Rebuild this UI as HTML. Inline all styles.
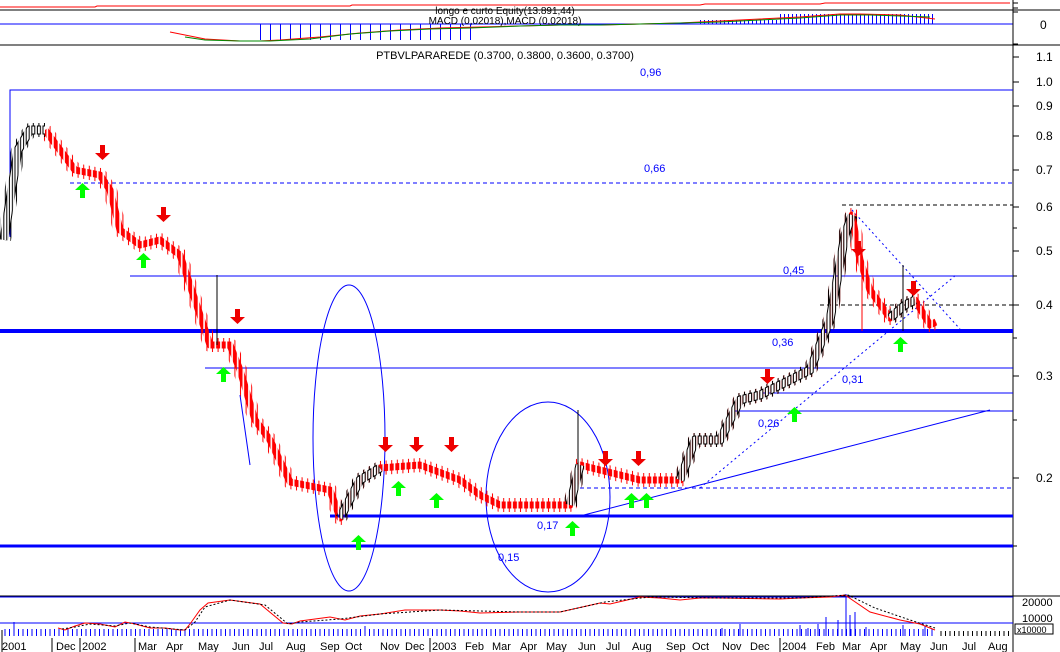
<!DOCTYPE html><html><head><meta charset="utf-8"><style>
html,body{margin:0;padding:0;background:#fff;width:1060px;height:652px;overflow:hidden}
svg{display:block;font-family:"Liberation Sans",sans-serif}
</style></head><body>
<svg width="1060" height="652" viewBox="0 0 1060 652" xmlns="http://www.w3.org/2000/svg">
<defs>
<pattern id="pb" x="2.5" y="0" width="5.6" height="10" patternUnits="userSpaceOnUse"><rect x="0.8" y="0" width="4" height="10" fill="#fff"/></pattern>
<pattern id="pi" x="2.5" y="0" width="5.6" height="10" patternUnits="userSpaceOnUse"><rect x="1.8" y="0" width="2" height="10" fill="#fff"/></pattern>
<pattern id="pw" x="2.5" y="0" width="5.6" height="10" patternUnits="userSpaceOnUse"><rect x="2.3" y="0" width="1" height="10" fill="#fff"/></pattern>
<mask id="mb" maskUnits="userSpaceOnUse" x="0" y="0" width="1060" height="652"><rect width="1060" height="652" fill="url(#pb)"/></mask>
<mask id="mi" maskUnits="userSpaceOnUse" x="0" y="0" width="1060" height="652"><rect width="1060" height="652" fill="url(#pi)"/></mask>
<mask id="mw" maskUnits="userSpaceOnUse" x="0" y="0" width="1060" height="652"><rect width="1060" height="652" fill="url(#pw)"/></mask>
<pattern id="h10" x="0" y="0" width="10" height="10" patternUnits="userSpaceOnUse"><rect x="0" width="1" height="10" fill="#00f"/></pattern>
<pattern id="h4" x="0" y="0" width="4" height="10" patternUnits="userSpaceOnUse"><rect x="0" width="1" height="10" fill="#00f"/></pattern>
<pattern id="v45" x="0" y="0" width="4.5" height="10" patternUnits="userSpaceOnUse"><rect x="0" width="1" height="10" fill="#00f"/></pattern>
<pattern id="v45k" x="0" y="0" width="4.5" height="10" patternUnits="userSpaceOnUse"><rect x="0" width="1" height="10" fill="#000"/></pattern>
</defs>
<rect width="1060" height="652" fill="#fff"/>
<!-- top panel -->
<polyline points="0,7 95,7 97,6 350,6 352,5 700,5 705,4 820,4 825,3 1010,3" fill="none" stroke="#f00"/>
<line x1="0" y1="10" x2="1060" y2="10" stroke="#000"/>
<rect x="258" y="24" width="215" height="16" fill="url(#h10)"/>
<rect x="700" y="14" width="236" height="10" fill="url(#h4)"/>
<rect x="700" y="14" width="80" height="6" fill="#fff"/>
<line x1="0" y1="24" x2="1013" y2="24" stroke="#00f"/>
<line x1="0" y1="45" x2="1060" y2="45" stroke="#000"/>
<text x="505" y="14" font-size="10" text-anchor="middle" fill="#000">longo e curto Equity(13.891,44)</text>
<text x="505" y="24" font-size="10" text-anchor="middle" fill="#000">MACD (0,02018),MACD (0,02018)</text>
<polyline points="170,32 185,35 205,39 240,41 260,41 280,40 320,37 360,33 400,30 440,28 480,27 520,26 560,25 600,25 640,24 680,23 720,21 760,19 800,17 840,14 860,14 900,15 935,19" fill="none" stroke="#f00"/>
<polyline points="185,37 205,40 240,41 270,41 310,39 350,34 390,31 430,29 470,28 520,26 560,25 600,25 640,24 680,23 720,22 760,20 800,18 840,15 870,15 900,16 930,17" fill="none" stroke="#080"/>
<!-- right axis -->
<line x1="1013" y1="0" x2="1013" y2="652" stroke="#000"/>
<g stroke="#000"><line x1="1013" y1="3" x2="1018" y2="3"/><line x1="1013" y1="8" x2="1018" y2="8"/><line x1="1013" y1="12" x2="1018" y2="12"/><line x1="1013" y1="44" x2="1018" y2="44"/>
<line x1="1013" y1="57" x2="1019" y2="57"/><line x1="1013" y1="82" x2="1019" y2="82"/><line x1="1013" y1="106" x2="1019" y2="106"/><line x1="1013" y1="136" x2="1019" y2="136"/><line x1="1013" y1="170" x2="1019" y2="170"/><line x1="1013" y1="207" x2="1019" y2="207"/><line x1="1013" y1="251" x2="1019" y2="251"/><line x1="1013" y1="305" x2="1019" y2="305"/><line x1="1013" y1="376" x2="1019" y2="376"/><line x1="1013" y1="478" x2="1019" y2="478"/>
<line x1="1013" y1="228" x2="1017" y2="228"/><line x1="1013" y1="276" x2="1017" y2="276"/><line x1="1013" y1="338" x2="1017" y2="338"/><line x1="1013" y1="420" x2="1017" y2="420"/><line x1="1013" y1="546" x2="1017" y2="546"/>
</g>
<g font-size="12" fill="#000">
<text x="1040" y="29">0</text>
<text x="1036" y="61">1.1</text><text x="1036" y="86">1.0</text><text x="1036" y="110">0.9</text>
<text x="1036" y="140">0.8</text><text x="1036" y="174">0.7</text><text x="1036" y="211">0.6</text>
<text x="1036" y="255">0.5</text><text x="1036" y="309">0.4</text><text x="1036" y="380">0.3</text>
<text x="1036" y="482">0.2</text>
<text x="1022" y="606" font-size="11">20000</text><text x="1022" y="622" font-size="11">10000</text>
</g>
<rect x="1015" y="624" width="38" height="10" fill="none" stroke="#000"/>
<text x="1017" y="633" font-size="9">x10000</text>
<text x="505" y="59" font-size="11" text-anchor="middle">PTBVLPARAREDE (0.3700, 0.3800, 0.3600, 0.3700)</text>
<!-- lines -->
<g stroke="#00f" fill="none">
<polyline points="10,237 10,90 1013,90"/>
<line x1="130" y1="276" x2="1013" y2="276"/>
<line x1="0" y1="331" x2="1013" y2="331" stroke-width="4"/>
<line x1="205" y1="368" x2="1013" y2="368"/>
<line x1="760" y1="393" x2="1013" y2="393"/>
<line x1="735" y1="411" x2="1013" y2="411"/>
<line x1="330" y1="516" x2="1013" y2="516" stroke-width="3"/>
<line x1="0" y1="546" x2="1013" y2="546" stroke-width="3"/>
<line x1="70" y1="183" x2="1013" y2="183" stroke-dasharray="4,3"/>
<line x1="580" y1="488" x2="1013" y2="488" stroke-dasharray="4,3"/>
<line x1="842" y1="205" x2="1013" y2="205" stroke-dasharray="4,3" stroke="#000"/>
<line x1="820" y1="305" x2="1013" y2="305" stroke-dasharray="4,3" stroke="#000"/>
<line x1="700" y1="488" x2="956" y2="275" stroke-dasharray="2,3"/>
<line x1="852" y1="210" x2="960" y2="329" stroke-dasharray="2,3"/>
<line x1="580" y1="516" x2="990" y2="410"/>
<line x1="240" y1="395" x2="250" y2="465"/>
<ellipse cx="349" cy="438" rx="36" ry="153"/>
<ellipse cx="548" cy="497" rx="62" ry="95"/>
</g>
<g font-size="11" fill="#00f">
<text x="640" y="76">0,96</text><text x="644" y="172">0,66</text><text x="783" y="274">0,45</text>
<text x="772" y="346">0,36</text><text x="842" y="383">0,31</text><text x="758" y="427">0,26</text>
<text x="537" y="529">0,17</text><text x="498" y="561">0,15</text>
</g>
<!-- candles: wicks -->
<polyline mask="url(#mw)" fill="none" stroke="#f00" stroke-width="14" stroke-linejoin="round" points="45,130 60,150 75,170 100,175 110,190 120,230 140,245 160,240 180,255 195,300 210,345 230,345 240,370 255,420 270,440 290,482 330,490 340,518 360,480 380,468 420,465 460,480 480,495 500,505 540,505 570,505 580,465 600,470 640,480 680,480 695,440 720,440 740,400 760,395 790,380 810,370 830,320 845,235 852,215 860,260 870,290 890,318 905,305 915,300 930,325 936,322"/>
<g mask="url(#mw)" fill="none" stroke="#000" stroke-width="14" stroke-linejoin="round">
<polyline points="4,240 10,200 18,150 30,130 45,130"/>
<polyline points="340,518 360,480 380,468"/>
<polyline points="570,505 580,465"/>
<polyline points="680,480 695,440 720,440 740,400 760,395 790,380 810,370 830,320 845,235 852,215"/>
<polyline points="890,318 905,305 915,300"/>
</g>
<!-- red bodies -->
<polyline mask="url(#mb)" fill="none" stroke="#f00" stroke-width="7" stroke-linejoin="round" points="45,130 60,150 75,170 100,175 110,190 120,230 140,245 160,240 180,255 195,300 210,345 230,345 240,370 255,420 270,440 290,482 330,490 340,518 360,480 380,468 420,465 460,480 480,495 500,505 540,505 570,505 580,465 600,470 640,480 680,480 695,440 720,440 740,400 760,395 790,380 810,370 830,320 845,235 852,215 860,260 870,290 890,318 905,305 915,300 930,325 936,322"/>
<!-- up candles: outline -->
<g mask="url(#mb)" fill="none" stroke="#000" stroke-width="9" stroke-linejoin="round">
<polyline points="4,240 10,200 18,150 30,130 45,130"/>
<polyline points="340,518 360,480 380,468"/>
<polyline points="570,505 580,465"/>
<polyline points="680,480 695,440 720,440 740,400 760,395 790,380 810,370 830,320 845,235 852,215"/>
<polyline points="890,318 905,305 915,300"/>
</g>
<g mask="url(#mi)" fill="none" stroke="#fff" stroke-width="7" stroke-linejoin="round">
<polyline points="4,240 10,200 18,150 30,130 45,130"/>
<polyline points="340,518 360,480 380,468"/>
<polyline points="570,505 580,465"/>
<polyline points="680,480 695,440 720,440 740,400 760,395 790,380 810,370 830,320 845,235 852,215"/>
<polyline points="890,318 905,305 915,300"/>
</g>
<line x1="217" y1="275" x2="217" y2="345" stroke="#000"/>
<line x1="578" y1="410" x2="578" y2="470" stroke="#000"/>
<line x1="862" y1="260" x2="862" y2="331" stroke="#f00"/>
<line x1="903" y1="265" x2="903" y2="331" stroke="#000"/>
<!-- arrows -->
<g fill="#e00">
<path d="M100 145h5v8h5l-7.5 7-7.5-7h5z"/><path d="M161 207h5v8h5l-7.5 7-7.5-7h5z"/><path d="M235 309h5v8h5l-7.5 7-7.5-7h5z"/>
<path d="M383 437h5v8h5l-7.5 7-7.5-7h5z"/><path d="M414 437h5v8h5l-7.5 7-7.5-7h5z"/><path d="M449 437h5v8h5l-7.5 7-7.5-7h5z"/>
<path d="M603 451h5v8h5l-7.5 7-7.5-7h5z"/><path d="M636 451h5v8h5l-7.5 7-7.5-7h5z"/><path d="M765 369h5v8h5l-7.5 7-7.5-7h5z"/>
<path d="M856 241h5v8h5l-7.5 7-7.5-7h5z"/><path d="M911 281h5v8h5l-7.5 7-7.5-7h5z"/>
</g>
<g fill="#0f0">
<path d="M80 198h5v-8h5l-7.5-7-7.5 7h5z"/><path d="M141 268h5v-8h5l-7.5-7-7.5 7h5z"/><path d="M221 382h5v-8h5l-7.5-7-7.5 7h5z"/>
<path d="M356 550h5v-8h5l-7.5-7-7.5 7h5z"/><path d="M396 496h5v-8h5l-7.5-7-7.5 7h5z"/><path d="M434 508h5v-8h5l-7.5-7-7.5 7h5z"/>
<path d="M570 536h5v-8h5l-7.5-7-7.5 7h5z"/><path d="M629 508h5v-8h5l-7.5-7-7.5 7h5z"/><path d="M644 508h5v-8h5l-7.5-7-7.5 7h5z"/>
<path d="M792 422h5v-8h5l-7.5-7-7.5 7h5z"/><path d="M898 352h5v-8h5l-7.5-7-7.5 7h5z"/>
</g>
<!-- bottom panel -->
<line x1="0" y1="596" x2="1060" y2="596" stroke="#000"/>
<line x1="0" y1="597" x2="1013" y2="597" stroke="#00f"/>
<line x1="0" y1="623" x2="1013" y2="623" stroke="#00f"/>
<rect x="3" y="629" width="933" height="7" fill="url(#v45)"/>
<rect x="937" y="631" width="73" height="5" fill="url(#v45k)"/>
<g stroke="#00f">
<line x1="14" y1="622" x2="14" y2="636"/><line x1="365" y1="626" x2="365" y2="636"/><line x1="740" y1="624" x2="740" y2="636"/>
<line x1="722" y1="628" x2="722" y2="636"/><line x1="800" y1="625" x2="800" y2="636"/><line x1="808" y1="628" x2="808" y2="636"/>
<line x1="818" y1="624" x2="818" y2="636"/><line x1="826" y1="617" x2="826" y2="636"/><line x1="838" y1="620" x2="838" y2="636"/>
<line x1="846" y1="594" x2="846" y2="636"/><line x1="850" y1="615" x2="850" y2="636"/><line x1="855" y1="612" x2="855" y2="636"/>
<line x1="866" y1="627" x2="866" y2="636"/><line x1="903" y1="625" x2="903" y2="636"/><line x1="925" y1="626" x2="925" y2="636"/>
</g>
<polyline points="58,628 65,630 75,626 85,623 100,624 115,627 125,622 135,624 150,628 165,628 180,630 185,630 190,624 200,610 208,603 230,600 260,604 283,623 292,624 300,621 330,617 345,620 360,616 380,614 405,610 440,610 460,611 480,613 520,612 560,612 600,603 610,604 640,597 660,598 680,600 700,598 720,598 780,599 800,598 830,597 845,595 870,612 900,620 920,624 935,630" fill="none" stroke="#f00"/>
<polyline points="62,629 75,627 90,624 115,626 130,623 150,627 185,630 195,622 205,607 230,600 265,605 288,624 300,622 340,619 380,614 440,610 520,612 560,612 605,602 650,597 720,598 800,598 848,595 875,608 910,620 935,628" fill="none" stroke="#000" stroke-dasharray="2,2"/>
<g font-size="11" fill="#000">
<text x="2" y="650">2001</text><text x="56" y="650">Dec</text><text x="82" y="650">2002</text>
<text x="138" y="650">Mar</text><text x="166" y="650">Apr</text><text x="198" y="650">May</text>
<text x="232" y="650">Jun</text><text x="259" y="650">Jul</text><text x="286" y="650">Aug</text>
<text x="320" y="650">Sep</text><text x="345" y="650">Oct</text><text x="380" y="650">Nov</text>
<text x="405" y="650">Dec</text><text x="432" y="650">2003</text><text x="465" y="650">Feb</text>
<text x="492" y="650">Mar</text><text x="520" y="650">Apr</text><text x="546" y="650">May</text>
<text x="578" y="650">Jun</text><text x="606" y="650">Jul</text><text x="632" y="650">Aug</text>
<text x="666" y="650">Sep</text><text x="692" y="650">Oct</text><text x="722" y="650">Nov</text>
<text x="750" y="650">Dec</text><text x="782" y="650">2004</text><text x="816" y="650">Feb</text>
<text x="842" y="650">Mar</text><text x="870" y="650">Apr</text><text x="900" y="650">May</text>
<text x="930" y="650">Jun</text><text x="962" y="650">Jul</text><text x="988" y="650">Aug</text>
</g>
<g stroke="#000">
<line x1="2" y1="630" x2="2" y2="652"/><line x1="52" y1="638" x2="52" y2="652"/><line x1="80" y1="638" x2="80" y2="652"/>
<line x1="135" y1="638" x2="135" y2="652"/><line x1="430" y1="638" x2="430" y2="652"/><line x1="780" y1="638" x2="780" y2="652"/>
</g>
</svg>
</body></html>
